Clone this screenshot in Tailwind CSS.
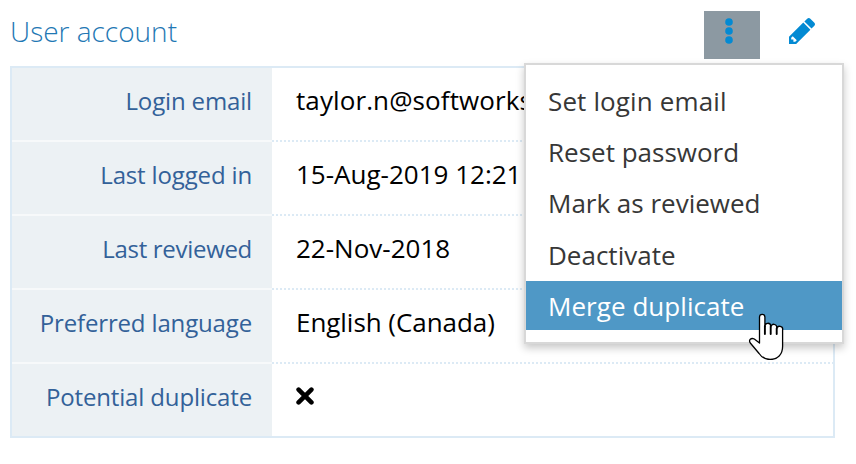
<!DOCTYPE html>
<html lang="en">
<head>
    <meta charset="UTF-8">
    <meta name="viewport" content="width=device-width, initial-scale=1.0">
    <title>User account</title>
    <script src="https://cdn.jsdelivr.net/npm/@tailwindcss/browser@4"></script>
</head>
<body class="relative w-[856px] h-[464px] overflow-hidden bg-white font-['Open_Sans','Noto_Sans',sans-serif]">
    <!-- Header -->
    <header class="flex items-start h-[66px] pl-[10px] pt-[11px]">
        <h1 class="font-light text-[28px] leading-[41px] text-[#1f78b4]">User account</h1>
        <button type="button" aria-label="Actions" class="ml-auto w-14 h-12 bg-[#8c99a2] flex items-start justify-center pt-[7px]">
            <svg class="w-2 h-[26px] translate-x-[-3px]" viewBox="0 0 8 26" fill="#038ad3">
                <circle cx="4" cy="4" r="3.8" />
                <circle cx="4" cy="13" r="3.8" />
                <circle cx="4" cy="22" r="3.8" />
            </svg>
        </button>
        <button type="button" aria-label="Edit" class="w-[55px] ml-[29px] pt-[7px] mr-[12px]">
            <svg class="w-[26px] h-[26px]" viewBox="128 149 1515 1515" fill="#038ad3">
                <path d="M491 1536l91-91-235-235-91 91v107h128v128h107zM960 416l416 416-832 832h-416v-416zM1643 512q0 53-37 90l-166 166-416-416 166-165q36-38 90-38 53 0 91 38l235 234q37 39 37 91z" />
            </svg>
        </button>
    </header>

    <!-- Account details -->
    <dl class="ml-[10px] w-[825px] h-[372px] border-2 border-[#dceaf5] text-[26px] text-black grid grid-cols-[260px_1fr] grid-rows-[74px_74px_74px_74px_72px]">
        <dt class="bg-[#ecf1f4] border-b-2 border-[#f7f9fa] pr-5 text-right text-2xl leading-[66px] tracking-[-0.15px] text-[#336199]">Login email</dt>
        <dd class="bg-[linear-gradient(90deg,#dceaf5_50%,transparent_50%)] bg-[length:4px_2px] bg-left-bottom bg-repeat-x pl-6 leading-[65px] tracking-[0.1px]">taylor.n@softworks</dd>
        <dt class="bg-[#ecf1f4] border-b-2 border-[#f7f9fa] pr-5 text-right text-2xl leading-[66px] tracking-[-0.15px] text-[#336199]">Last logged in</dt>
        <dd class="bg-[linear-gradient(90deg,#dceaf5_50%,transparent_50%)] bg-[length:4px_2px] bg-left-bottom bg-repeat-x pl-6 leading-[65px]">15-Aug-2019 12:21</dd>
        <dt class="bg-[#ecf1f4] border-b-2 border-[#f7f9fa] pr-5 text-right text-2xl leading-[66px] tracking-[-0.3px] text-[#336199]">Last reviewed</dt>
        <dd class="bg-[linear-gradient(90deg,#dceaf5_50%,transparent_50%)] bg-[length:4px_2px] bg-left-bottom bg-repeat-x pl-6 leading-[65px]">22-Nov-2018</dd>
        <dt class="bg-[#ecf1f4] border-b-2 border-[#f7f9fa] pr-5 text-right text-2xl leading-[66px] tracking-[-0.15px] text-[#336199]">Preferred language</dt>
        <dd class="bg-[linear-gradient(90deg,#dceaf5_50%,transparent_50%)] bg-[length:4px_2px] bg-left-bottom bg-repeat-x pl-6 leading-[65px] tracking-[-0.05px]">English (Canada)</dd>
        <dt class="bg-[#ecf1f4] pr-5 text-right text-2xl leading-[66px] tracking-[-0.15px] text-[#336199]">Potential duplicate</dt>
        <dd class="pl-6 pt-[23px]">
            <svg class="w-[18px] h-[18px]" viewBox="0 0 18 18" stroke="#000" stroke-width="4.6" stroke-linecap="round">
                <path d="M2.6 2.6l12.8 12.8M15.4 2.6L2.6 15.4" />
            </svg>
        </dd>
    </dl>

    <!-- Actions menu -->
    <ul class="absolute left-[524px] top-[63px] w-[320px] h-[281px] border-2 border-[#d8d8d8] bg-white pt-[11px] text-[26px] leading-[51px] text-[#373737] shadow-[0_4px_8px_rgba(0,0,0,0.22)]">
        <li class="h-[49px] mb-[2px] pl-[22px] tracking-[0.13px]">Set login email</li>
        <li class="h-[49px] mb-[2px] pl-[22px]">Reset password</li>
        <li class="h-[49px] mb-[3px] pl-[22px]">Mark as reviewed</li>
        <li class="h-[49px] mb-[2px] pl-[22px]">Deactivate</li>
        <li class="h-[49px] pl-[22px] tracking-[0.05px] bg-[#4f98c6] text-white">Merge duplicate</li>
    </ul>

    <!-- Pointer -->
    <svg class="absolute left-[748px] top-[312px] w-9 h-12" viewBox="0 0 36 48" fill="#fff" stroke="#000" stroke-width="1.3" stroke-linejoin="round" stroke-linecap="round">
        <path d="M11.500 31V5a2.700 2.700 0 0 1 5.400 0v9.500a2.900 2.900 0 0 1 5.800-.6v1a2.900 2.900 0 0 1 6 .8v1a2.900 2.900 0 0 1 5.900 1.200V34.500c0 8-5 13-12.500 13-5.500 0-8.500-2.300-11-6L2.300 31c-2-3 .7-5.500 4-4l5.200 4z" />
        <path d="M16.900 14v8M22.700 14.500v7.500M28.700 16.500v5.500" stroke-width="1.900" />
    </svg>
</body>
</html>
